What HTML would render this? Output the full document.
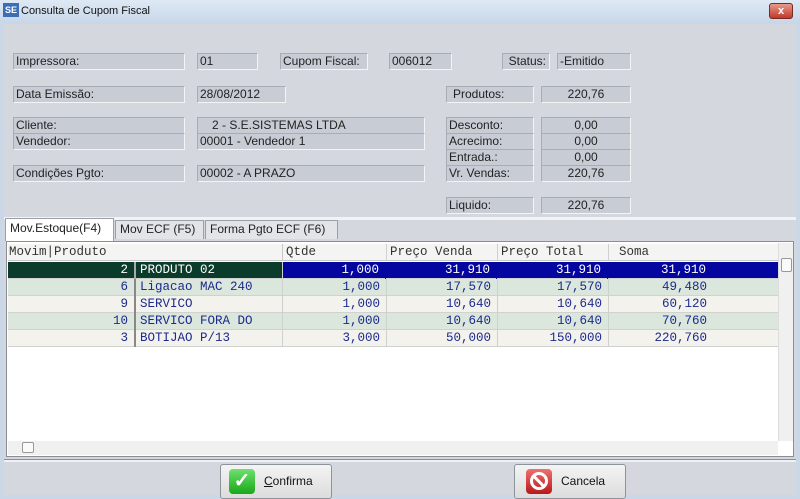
<!DOCTYPE html>
<html><head><meta charset="utf-8"><style>
*{margin:0;padding:0;box-sizing:border-box}
body{width:800px;height:499px;overflow:hidden;background:#c9d7e6;font-family:"Liberation Sans",sans-serif;position:relative}
.a{position:absolute}
.tb{left:0;top:0;width:800px;height:24px;background:linear-gradient(#dfe9f5,#c7d6e8);font-size:11px;color:#111}
.main{left:4px;top:24px;width:792px;height:471px;background:#d5d7de}
.f{position:absolute;height:17px;background:#c8ccd4;border:1px solid;border-color:#a8acb4 #f4f4f6 #f4f4f6 #a8acb4;font-size:12px;color:#222;line-height:15px;padding-left:2px;white-space:nowrap;overflow:hidden}
.c{text-align:center;padding:0}
.tab{position:absolute;top:220px;height:19px;font-size:12px;line-height:17px;border:1px solid #9aa0a8;border-bottom:none;background:#e2e4e8;color:#222;padding-left:4px}
.grid{left:6px;top:241px;width:788px;height:216px;background:#fff;border:1px solid #8a8f96}
.row{position:absolute;left:1px;width:771px;height:17px;font-family:"Liberation Mono",monospace;font-size:12.5px;line-height:17px;color:#1b2a8c;border-bottom:1px solid #d0d2d0}
.row span{position:absolute;top:0;height:17px;text-align:right;padding-right:6px;border-right:1px solid #cfd1cf}
.btn{position:absolute;top:464px;height:35px;width:112px;border:1px solid #8d939a;border-radius:3px;background:linear-gradient(#f4f4f4,#dcdcdc);font-size:12px;color:#111;line-height:33px}
</style></head><body>
<div class="a tb"><div class="a" style="left:3px;top:3px;width:16px;height:14px;background:#3b6fb5;color:#fff;font-size:9px;font-weight:bold;text-align:center;line-height:14px">SE</div><div class="a" style="left:21px;top:5px">Consulta de Cupom Fiscal</div>
<div class="a" style="left:769px;top:3px;width:24px;height:16px;background:linear-gradient(#e89a8a,#c0392b);border:1px solid #7a2a20;border-radius:3px;color:#fff;font-size:11px;text-align:center;line-height:14px;font-weight:bold">x</div></div>
<div class="a main"></div>
<div class="f" style="left:13px;top:53px;width:172px">Impressora:</div>
<div class="f" style="left:197px;top:53px;width:61px">01</div>
<div class="f" style="left:280px;top:53px;width:88px">Cupom Fiscal:</div>
<div class="f" style="left:389px;top:53px;width:63px">006012</div>
<div class="f" style="left:502px;top:53px;width:48px;text-align:right;padding-right:3px">Status:</div>
<div class="f" style="left:557px;top:53px;width:74px">-Emitido</div>
<div class="f" style="left:13px;top:86px;width:172px">Data Emissão:</div>
<div class="f" style="left:197px;top:86px;width:89px">28/08/2012</div>
<div class="f" style="left:446px;top:86px;width:88px;padding-left:6px">Produtos:</div>
<div class="f c" style="left:541px;top:86px;width:90px">220,76</div>
<div class="f" style="left:13px;top:117px;width:172px">Cliente:</div>
<div class="f" style="left:13px;top:133px;width:172px">Vendedor:</div>
<div class="f" style="left:197px;top:117px;width:228px;padding-left:14px">2 - S.E.SISTEMAS LTDA</div>
<div class="f" style="left:197px;top:133px;width:228px">00001 - Vendedor 1</div>
<div class="f" style="left:13px;top:165px;width:172px">Condições Pgto:</div>
<div class="f" style="left:197px;top:165px;width:228px">00002 - A PRAZO</div>
<div class="f" style="left:446px;top:117px;width:88px">Desconto:</div>
<div class="f" style="left:446px;top:133px;width:88px">Acrecimo:</div>
<div class="f" style="left:446px;top:149px;width:88px">Entrada.:</div>
<div class="f" style="left:446px;top:165px;width:88px">Vr. Vendas:</div>
<div class="f c" style="left:541px;top:117px;width:90px">0,00</div>
<div class="f c" style="left:541px;top:133px;width:90px">0,00</div>
<div class="f c" style="left:541px;top:149px;width:90px">0,00</div>
<div class="f c" style="left:541px;top:165px;width:90px">220,76</div>
<div class="f" style="left:446px;top:197px;width:88px">Liquido:</div>
<div class="f c" style="left:541px;top:197px;width:90px">220,76</div>
<div class="a" style="left:4px;top:217px;width:792px;height:3px;background:#f2f3f5"></div>
<div class="tab" style="left:5px;top:218px;height:23px;width:109px;background:#fff;line-height:19px;z-index:2">Mov.Estoque(F4)</div>
<div class="tab" style="left:115px;width:89px">Mov ECF (F5)</div>
<div class="tab" style="left:205px;width:133px">Forma Pgto ECF (F6)</div>
<div class="a grid">
<div class="row" style="top:2px;background:#f4f4f2;color:#333;border-bottom:1px solid #c8c8c8"><span style="left:0;width:275px;text-align:left;padding-left:1px;border-right:1px solid #c8c8c8">Movim|Produto</span><span style="left:275px;width:104px;text-align:left;padding-left:3px">Qtde</span><span style="left:379px;width:111px;text-align:left;padding-left:3px">Preço Venda</span><span style="left:490px;width:111px;text-align:left;padding-left:3px">Preço Total</span><span style="left:601px;width:170px;text-align:left;padding-left:10px;border:none">Soma</span></div>
<div class="row" style="top:20px;background:#0b3b2b;color:#fff"><span style="left:0;width:128px;border-right:2px solid #aaa">2</span><span style="left:128px;width:147px;text-align:left;padding-left:4px">PRODUTO 02</span></div>
<div class="row" style="top:20px;left:276px;width:496px;background:#0505a0;color:#fff"><span style="left:0;width:103px;border-color:#0505a0">1,000</span><span style="left:103px;width:111px;border-color:#0505a0">31,910</span><span style="left:214px;width:111px;border-color:#0505a0">31,910</span><span style="left:325px;width:104px;border:none">31,910</span></div>
<div class="row" style="top:37px;background:#dbe6dc"><span style="left:0;width:128px;border-right:2px solid #888">6</span><span style="left:128px;width:147px;text-align:left;padding-left:4px">Ligacao MAC 240</span><span style="left:275px;width:104px">1,000</span><span style="left:379px;width:111px">17,570</span><span style="left:490px;width:111px">17,570</span><span style="left:601px;width:104px;border:none">49,480</span></div>
<div class="row" style="top:54px;background:#f4f2ec"><span style="left:0;width:128px;border-right:2px solid #888">9</span><span style="left:128px;width:147px;text-align:left;padding-left:4px">SERVICO</span><span style="left:275px;width:104px">1,000</span><span style="left:379px;width:111px">10,640</span><span style="left:490px;width:111px">10,640</span><span style="left:601px;width:104px;border:none">60,120</span></div>
<div class="row" style="top:71px;background:#dbe6dc"><span style="left:0;width:128px;border-right:2px solid #888">10</span><span style="left:128px;width:147px;text-align:left;padding-left:4px">SERVICO FORA DO</span><span style="left:275px;width:104px">1,000</span><span style="left:379px;width:111px">10,640</span><span style="left:490px;width:111px">10,640</span><span style="left:601px;width:104px;border:none">70,760</span></div>
<div class="row" style="top:88px;background:#f4f2ec"><span style="left:0;width:128px;border-right:2px solid #888">3</span><span style="left:128px;width:147px;text-align:left;padding-left:4px">BOTIJAO P/13</span><span style="left:275px;width:104px">3,000</span><span style="left:379px;width:111px">50,000</span><span style="left:490px;width:111px">150,000</span><span style="left:601px;width:104px;border:none">220,760</span></div>
<div class="a" style="left:771px;top:1px;width:15px;height:198px;background:#f0f0f0;border-left:1px solid #ddd"><div class="a" style="left:2px;top:15px;width:11px;height:14px;border:1px solid #999;border-radius:2px;background:#fafafa"></div></div>
<div class="a" style="left:1px;top:199px;width:770px;height:14px;background:#f0f0f0"><div class="a" style="left:14px;top:1px;width:12px;height:11px;border:1px solid #999;border-radius:2px;background:#fafafa"></div></div>
</div>
<div class="a" style="left:4px;top:459px;width:792px;height:3px;background:#eef0f2;border-top:1px solid #8a9099"></div>
<div class="btn" style="left:220px"><div class="a" style="left:8px;top:4px;width:26px;height:25px;border-radius:4px;background:linear-gradient(#6fe06f,#18a818);color:#fff;font-size:20px;text-align:center;line-height:25px;font-weight:bold">✓</div><span class="a" style="left:43px"><u>C</u>onfirma</span></div>
<div class="btn" style="left:514px"><div class="a" style="left:11px;top:4px;width:26px;height:25px;border-radius:4px;background:linear-gradient(#f07070,#b81818)"><div class="a" style="left:4px;top:3px;width:18px;height:18px;border:3px solid #fff;border-radius:50%"></div><div class="a" style="left:5px;top:11px;width:16px;height:3px;background:#fff;transform:rotate(45deg)"></div></div><span class="a" style="left:46px">Cancela</span></div>
</body></html>
